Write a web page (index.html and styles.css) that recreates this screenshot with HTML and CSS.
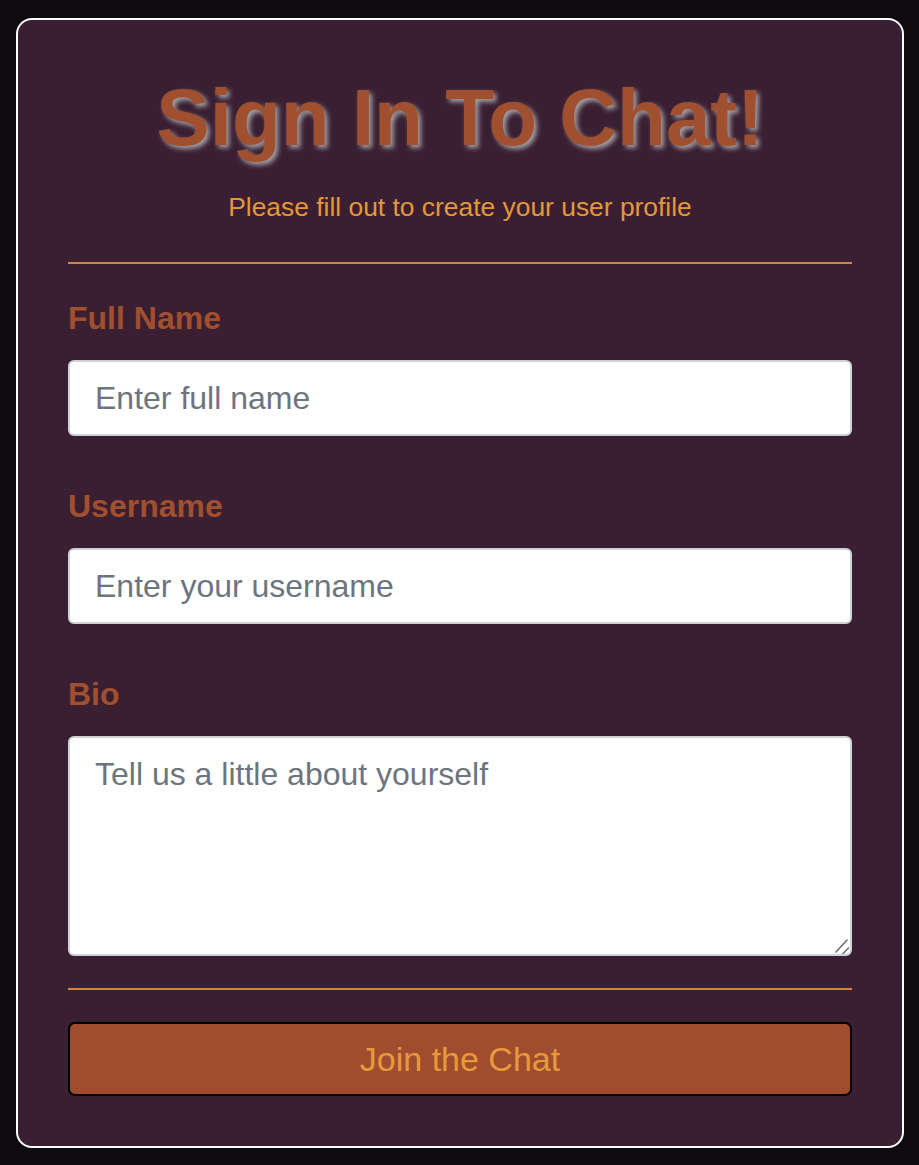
FILE: index.html
```html
<!DOCTYPE html>
<html lang="en">
<head>
<meta charset="utf-8">
<title>Sign In To Chat!</title>
<link rel="stylesheet" href="styles.css">
</head>
<body>
  <main class="card">
    <h1 class="title">Sign In To Chat!</h1>
    <p class="subtitle">Please fill out to create your user profile</p>
    <hr class="divider">
    <form class="form">
      <div class="field">
        <label class="label" for="fullname">Full Name</label>
        <input class="control" id="fullname" type="text" placeholder="Enter full name">
      </div>
      <div class="field">
        <label class="label" for="username">Username</label>
        <input class="control" id="username" type="text" placeholder="Enter your username">
      </div>
      <div class="field">
        <label class="label" for="bio">Bio</label>
        <textarea class="control textarea" id="bio" placeholder="Tell us a little about yourself"></textarea>
      </div>
      <hr class="divider divider-bottom">
      <button class="submit" type="button">Join the Chat</button>
    </form>
  </main>
</body>
</html>
```

FILE: styles.css
```css
html, body {
  margin: 0;
  padding: 0;
}

body {
  background: #0e0a0f;
  font-family: "Liberation Sans", Arial, Helvetica, sans-serif;
  padding: 18px 15px 18px 16px;
}

.card {
  background: #3a1f32;
  border: 2px solid #ffffff;
  border-radius: 16px;
  padding: 52px 50px 50px 50px;
}

.title {
  margin: 0;
  text-align: center;
  font-size: 80px;
  line-height: 92px;
  font-weight: 700;
  color: #a0502e;
  text-shadow: 3px 3px 5px #a3a1a6;
}

.subtitle {
  margin: 28px 0 0;
  text-align: center;
  font-size: 26.4px;
  line-height: 30px;
  color: #e3983c;
}

.divider {
  margin: 40px 0 0;
  border: 0;
  height: 2px;
  background: #cd853f;
}

.form {
  display: flex;
  flex-direction: column;
}

.field {
  display: flex;
  flex-direction: column;
  margin-top: 36px;
}

.field + .field {
  margin-top: 52px;
}

.label {
  display: block;
  font-size: 32px;
  line-height: 37px;
  font-weight: 700;
  color: #a0502e;
  margin-bottom: 23px;
}

.control {
  display: block;
  box-sizing: border-box;
  width: 100%;
  height: 76px;
  margin: 0;
  padding: 17px 25px;
  font-family: "Liberation Sans", Arial, Helvetica, sans-serif;
  font-size: 32px;
  line-height: 38px;
  color: #212529;
  background-color: #ffffff;
  border: 2px solid #cfd2d6;
  border-radius: 6px;
  outline: none;
}

.control::placeholder {
  color: #6c757d;
  opacity: 1;
}

.textarea {
  height: 220px;
  resize: none;
  background-image: url("data:image/svg+xml,%3Csvg xmlns='http://www.w3.org/2000/svg' width='20' height='20'%3E%3Cpath d='M6 18L17 6M13 19.5L18.5 14' stroke='%23707070' stroke-width='1.6' stroke-linecap='round' fill='none'/%3E%3C/svg%3E");
  background-repeat: no-repeat;
  background-position: right 0 bottom 0;
  background-size: 20px 20px;
}

.divider-bottom {
  margin-top: 32px;
}

.submit {
  display: block;
  box-sizing: border-box;
  width: 100%;
  height: 74px;
  margin-top: 32px;
  padding: 0;
  font-family: "Liberation Sans", Arial, Helvetica, sans-serif;
  font-size: 34px;
  line-height: 39px;
  color: #e8993c;
  background: #a04c2e;
  border: 2px solid #000000;
  border-radius: 7px;
  cursor: pointer;
}
```
